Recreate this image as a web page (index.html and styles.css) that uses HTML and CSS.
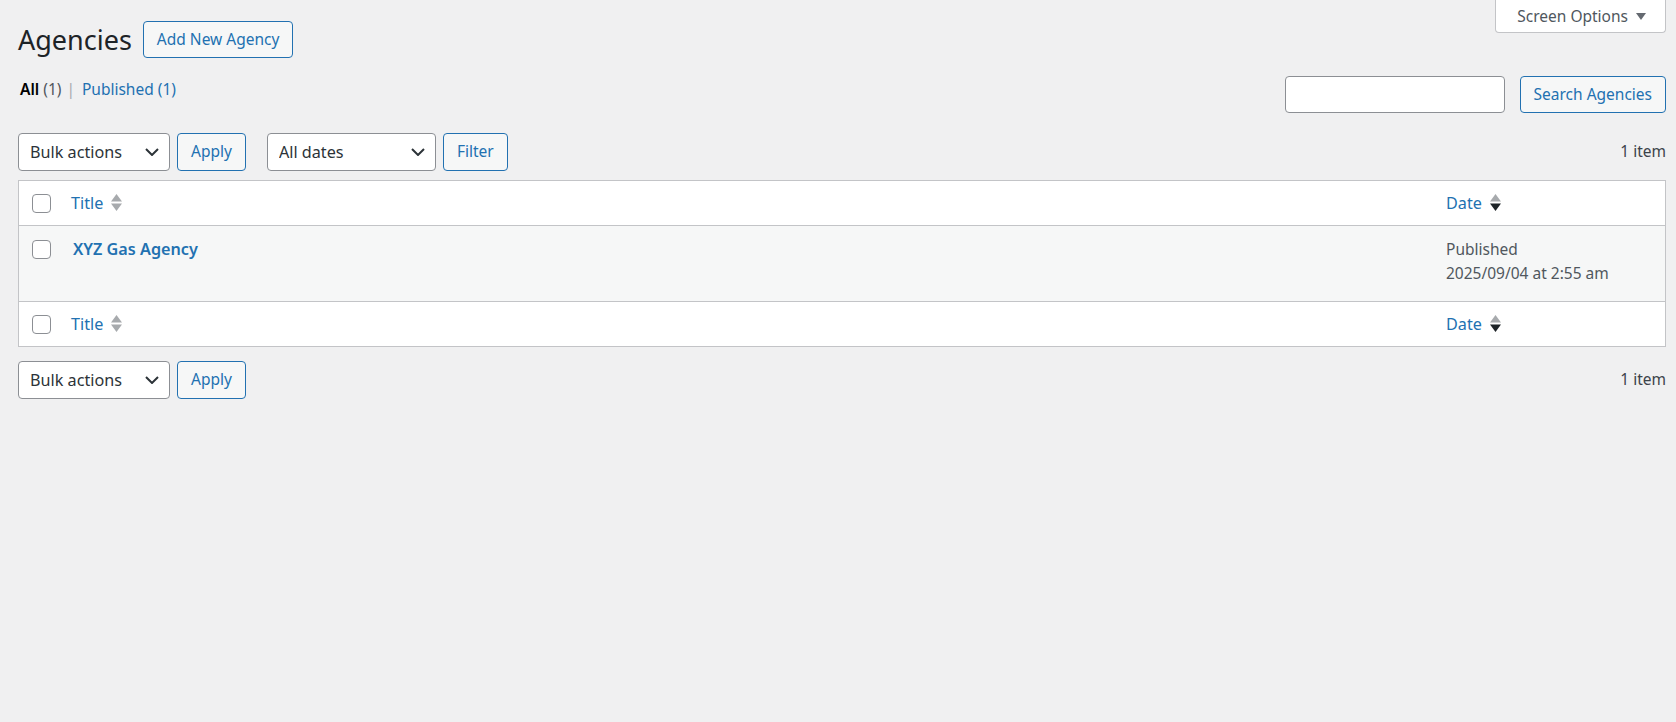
FILE: index.html
```html
<!DOCTYPE html>
<html lang="en">
<head>
<meta charset="utf-8">
<title>Agencies</title>
<link rel="stylesheet" href="styles.css">
</head>
<body>
<div class="screen-meta">
  <button class="screen-options" type="button">Screen Options
    <svg class="so-arrow" width="10" height="7" viewBox="0 0 10 7" aria-hidden="true"><path d="M0 0h10L5 7z" fill="currentColor"/></svg>
  </button>
</div>
<div class="wrap">
  <div class="title-row">
    <h1>Agencies</h1>
    <a class="button title-action" href="#">Add New Agency</a>
  </div>

  <div class="views-row">
    <ul class="subsubsub">
      <li><a class="current" href="#">All <span class="count">(1)</span></a></li>
      <li class="sep">|</li>
      <li><a href="#">Published <span class="count">(1)</span></a></li>
    </ul>
    <form class="search-box">
      <input type="search" class="search-input" aria-label="Search Agencies">
      <button class="button search-btn" type="button">Search Agencies</button>
    </form>
  </div>

  <div class="tablenav">
    <select class="select bulk"><option>Bulk actions</option></select>
    <button class="button act" type="button">Apply</button>
    <select class="select dates"><option>All dates</option></select>
    <button class="button act" type="button">Filter</button>
    <span class="displaying-num">1 item</span>
  </div>

  <table class="list-table">
    <colgroup><col class="col-cb"><col class="col-title"><col class="col-date"></colgroup>
    <thead>
      <tr>
        <td class="check-column"><input type="checkbox" class="cb" aria-label="Select all"></td>
        <th class="column-title"><a class="sort-link" href="#">Title
          <svg class="sort-ind" width="11" height="18" viewBox="0 0 11 18" aria-hidden="true"><path d="M5.5 0L11 7.5H0z" fill="#a7aaad"/><path d="M0 9.5h11L5.5 17z" fill="#a7aaad"/></svg></a></th>
        <th class="column-date"><a class="sort-link" href="#">Date
          <svg class="sort-ind" width="11" height="18" viewBox="0 0 11 18" aria-hidden="true"><path d="M5.5 0L11 7.5H0z" fill="#a7aaad"/><path d="M0 9.5h11L5.5 17z" fill="#1d2327"/></svg></a></th>
      </tr>
    </thead>
    <tbody>
      <tr>
        <th class="check-column"><input type="checkbox" class="cb" aria-label="Select XYZ Gas Agency"></th>
        <td class="column-title"><strong><a class="row-title" href="#">XYZ Gas Agency</a></strong></td>
        <td class="column-date">Published<br>2025/09/04 at 2:55 am</td>
      </tr>
    </tbody>
    <tfoot>
      <tr>
        <td class="check-column"><input type="checkbox" class="cb" aria-label="Select all"></td>
        <th class="column-title"><a class="sort-link" href="#">Title
          <svg class="sort-ind" width="11" height="18" viewBox="0 0 11 18" aria-hidden="true"><path d="M5.5 0L11 7.5H0z" fill="#a7aaad"/><path d="M0 9.5h11L5.5 17z" fill="#a7aaad"/></svg></a></th>
        <th class="column-date"><a class="sort-link" href="#">Date
          <svg class="sort-ind" width="11" height="18" viewBox="0 0 11 18" aria-hidden="true"><path d="M5.5 0L11 7.5H0z" fill="#a7aaad"/><path d="M0 9.5h11L5.5 17z" fill="#1d2327"/></svg></a></th>
      </tr>
    </tfoot>
  </table>

  <div class="tablenav bottom">
    <select class="select bulk"><option>Bulk actions</option></select>
    <button class="button act" type="button">Apply</button>
    <span class="displaying-num">1 item</span>
  </div>
</div>
</body>
</html>
```

FILE: styles.css
```css
* { box-sizing: border-box; }
html, body { margin: 0; padding: 0; }
body {
  background: #f0f0f1;
  color: #3c434a;
  font-family: "Noto Sans", "Open Sans", sans-serif;
  font-size: 15.5px;
  line-height: 1.4;
}
a { color: #2271b1; text-decoration: none; }

/* Screen options tab */
.screen-meta { float: right; margin-right: 10px; }
.screen-options {
  display: flex;
  align-items: center;
  gap: 8px;
  height: 33px;
  padding: 0 19px 0 21px;
  background: #fff;
  border: 1px solid #c3c4c7;
  border-top: 0;
  border-radius: 0 0 4px 4px;
  color: #50575e;
  font-family: inherit;
  font-size: 15.5px;
}
.so-arrow { color: #646970; }

.wrap { padding: 0 10px 0 18px; }

/* Title */
.title-row {
  display: flex;
  align-items: center;
  gap: 11px;
  padding-top: 21px;
}
h1 {
  margin: 0;
  font-size: 27px;
  font-weight: 400;
  line-height: 37px;
  color: #1d2327;
}

.button {
  display: inline-flex;
  align-items: center;
  justify-content: center;
  height: 38px;
  padding: 0 13px;
  border: 1px solid #2271b1;
  border-radius: 4px;
  background: #f6f7f7;
  color: #2271b1;
  font-family: inherit;
  font-size: 15.5px;
  line-height: 1;
  white-space: nowrap;
}
.title-action { height: 37px; }

/* Views + search */
.views-row {
  display: flex;
  justify-content: space-between;
  align-items: flex-start;
  margin-top: 18px;
}
.subsubsub {
  display: flex;
  list-style: none;
  margin: 1px 0 0 2px;
  padding: 0;
  line-height: 24px;
  font-size: 15.5px;
  color: #50575e;
}
.subsubsub a.current { color: #000; font-weight: 600; }
.subsubsub .count { color: #50575e; font-weight: 400; }
.subsubsub a:not(.current) .count { color: #2271b1; }
.subsubsub .sep { color: #a7aaad; margin: 0 7px 0 5px; }

.search-box { display: flex; gap: 15px; margin: 0; }
.search-input {
  width: 220px;
  height: 37px;
  margin: 0;
  border: 1px solid #8c8f94;
  border-radius: 4px;
  background: #fff;
}
.search-btn { height: 37px; }

/* Table nav */
.tablenav {
  display: flex;
  align-items: center;
  height: 38px;
  margin-top: 20px;
}
.tablenav.bottom { margin-top: 14px; }
.select {
  -webkit-appearance: none;
  appearance: none;
  height: 38px;
  margin: 0;
  padding: 0 28px 0 11px;
  border: 1px solid #8c8f94;
  border-radius: 4px;
  background: #fff url("data:image/svg+xml,%3Csvg xmlns='http://www.w3.org/2000/svg' width='14' height='8' viewBox='0 0 14 8'%3E%3Cpath d='M1 1l6 6 6-6' fill='none' stroke='%232c3338' stroke-width='2'/%3E%3C/svg%3E") no-repeat right 10px center;
  color: #2c3338;
  font-family: inherit;
  font-size: 16.2px;
}
.select.bulk { width: 152px; }
.select.dates { width: 169px; margin-left: 21px; }
.act { margin-left: 7px; }
.displaying-num { margin-left: auto; color: #3c434a; font-size: 15.5px; }

/* Table */
.list-table {
  width: 100%;
  margin-top: 9px;
  border: 1px solid #c3c4c7;
  border-spacing: 0;
  border-collapse: separate;
  table-layout: fixed;
  background: #fff;
  font-size: 16.2px;
  line-height: 24px;
}
.col-cb { width: 40px; }
.col-date { width: 231px; }
.list-table th, .list-table td {
  text-align: left;
  font-weight: 400;
  padding: 10px 12px;
}
.list-table thead th, .list-table thead td {
  vertical-align: middle;
  border-bottom: 1px solid #c3c4c7;
}
.list-table tfoot th, .list-table tfoot td {
  vertical-align: middle;
  border-top: 1px solid #c3c4c7;
}
.list-table .check-column { padding-left: 13px; padding-right: 0; }
.cb {
  -webkit-appearance: none;
  appearance: none;
  display: block;
  width: 19px;
  height: 19px;
  margin: 0;
  border: 1px solid #8c8f94;
  border-radius: 4px;
  background: #fff;
}
.sort-link {
  display: inline-flex;
  align-items: center;
  gap: 8px;
  color: #2271b1;
}
.sort-ind { display: block; }

.list-table tbody tr { background: #f6f7f7; }
.list-table tbody td, .list-table tbody th {
  vertical-align: top;
  padding: 11px 12px 16px;
}
.list-table tbody .check-column { padding: 14px 0 0 13px; }
.row-title { font-weight: 600; margin-left: 2px; }
.list-table tbody .column-date { color: #50575e; font-size: 15.5px; }
```
